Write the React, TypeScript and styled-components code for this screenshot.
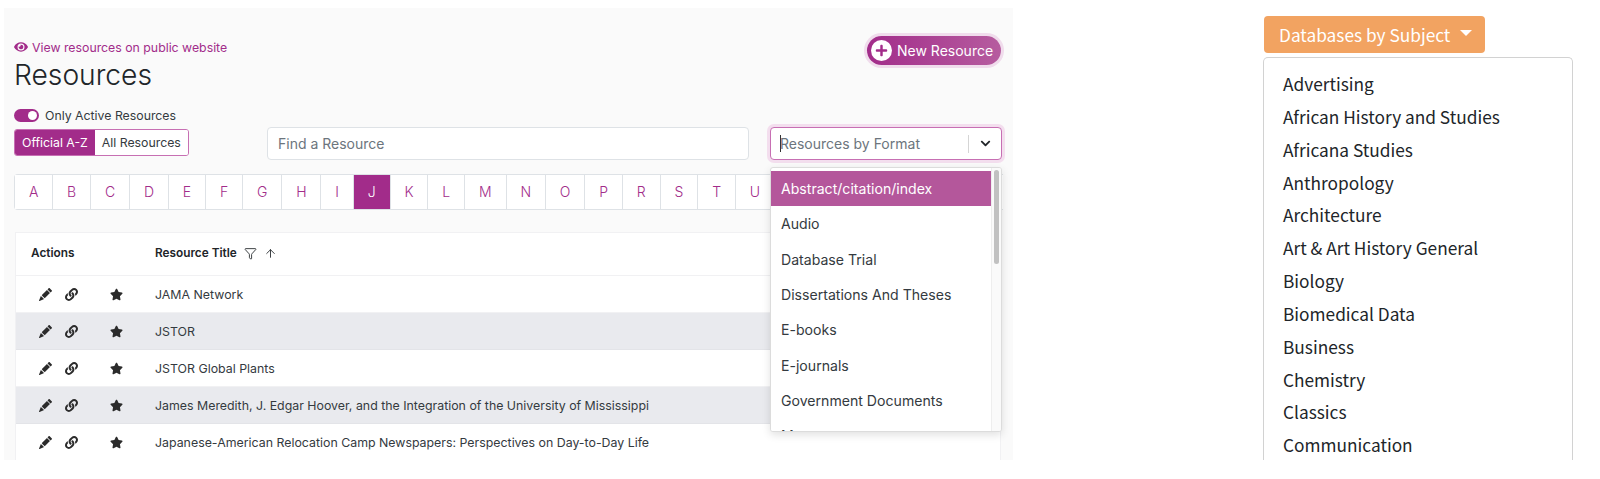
import React from 'react';
import styled, { createGlobalStyle } from 'styled-components';
import { FaEye, FaLink, FaPlus, FaStar, FaChevronDown } from 'react-icons/fa';
import { BsPencilFill } from 'react-icons/bs';
import { ArrowUp, Filter } from 'lucide-react';

const GlobalStyle = createGlobalStyle`
  html, body {
    margin: 0;
    background: #fff;
    font-family: Inter, "Liberation Sans", sans-serif;
  }
`;

const Page = styled.div`
  display: flex;
  width: 1600px;
  height: 479px;
  overflow: hidden;
`;

const Panel = styled.div`
  box-sizing: border-box;
  width: 1009px;
  height: 452px;
  margin: 8px 0 0 4px;
  padding: 31px 10px 0;
  background: #fafafa;
  overflow: hidden;
  flex: none;
`;

const HeaderRow = styled.div`
  display: flex;
  justify-content: space-between;
  align-items: flex-start;
  height: 56px;
`;

const PublicLink = styled.a`
  display: flex;
  align-items: center;
  gap: 4px;
  height: 16px;
  font-size: 12.3px;
  color: #a22c8a;
  svg { width: 14px; height: 14px; }
`;

const Title = styled.h1`
  margin: 0;
  font-size: 28.2px;
  line-height: 40px;
  font-weight: 300;
  color: #212529;
`;

const NewButton = styled.button`
  display: flex;
  align-items: center;
  gap: 5px;
  box-sizing: border-box;
  width: 134px;
  height: 29px;
  margin: -3px 2px 0 0;
  padding: 0 0 0 4px;
  border: 0;
  border-radius: 15px;
  background: linear-gradient(90deg, #a22c8a, #b65c9f);
  box-shadow: 0 0 0 3px #f0dcec;
  color: #fff;
  font: 400 14px Inter, sans-serif;
`;

const PlusBadge = styled.span`
  display: flex;
  align-items: center;
  justify-content: center;
  width: 21px;
  height: 21px;
  border-radius: 50%;
  background: #fff;
  color: #a22c8a;
  svg { width: 13px; height: 13px; }
`;

const Controls = styled.div`
  display: flex;
  align-items: flex-end;
  margin-top: 13px;
`;

const LeftControls = styled.div`
  width: 253px;
  padding-bottom: 4px;
  flex: none;
`;

const ToggleRow = styled.div`
  display: flex;
  align-items: center;
  gap: 6px;
  height: 14px;
  font-size: 12.3px;
  color: #343a40;
`;

const Toggle = styled.span`
  display: flex;
  justify-content: flex-end;
  align-items: center;
  box-sizing: border-box;
  width: 25px;
  height: 13px;
  padding: 0 2px;
  border-radius: 7px;
  background: #a22c8a;
  &::after {
    content: '';
    width: 9px;
    height: 9px;
    border-radius: 50%;
    background: #fff;
  }
`;

const ButtonGroup = styled.div`
  display: flex;
  width: fit-content;
  box-sizing: border-box;
  height: 27px;
  margin-top: 7px;
  border: 1px solid #c76fb3;
  border-radius: 3px;
  overflow: hidden;
  background: #fff;
`;

const GroupButton = styled.span<{ $active?: boolean }>`
  display: flex;
  align-items: center;
  padding: 0 7px;
  font-size: 12.3px;
  background: ${p => (p.$active ? '#a22c8a' : '#fff')};
  color: ${p => (p.$active ? '#fff' : '#343a40')};
`;

const SearchBox = styled.div`
  display: flex;
  align-items: center;
  box-sizing: border-box;
  flex: 1;
  height: 33px;
  padding: 0 10px;
  border: 1px solid #dee2e6;
  border-radius: 4px;
  background: #fff;
  font-size: 14px;
  color: #6c757d;
`;

const SelectWrap = styled.div`
  position: relative;
  width: 232px;
  margin: 0 1px 0 21px;
  flex: none;
`;

const SelectBox = styled.div`
  display: flex;
  align-items: center;
  box-sizing: border-box;
  height: 33px;
  border: 1px solid #c76fb3;
  border-radius: 4px;
  box-shadow: 0 0 0 3px #f3deee;
  background: #fff;
  font-size: 14px;
  color: #6c757d;
`;

const TextCaret = styled.span`
  width: 1px;
  height: 17px;
  margin-left: 9px;
  background: #333;
`;

const SelectText = styled.span`
  flex: 1;
  margin-left: -1px;
`;

const SelectSplit = styled.span`
  width: 1px;
  height: 18px;
  background: #d5d5d5;
`;

const SelectChevron = styled.span`
  display: flex;
  justify-content: center;
  width: 32px;
  color: #212529;
  svg { width: 11px; height: 11px; }
`;

const Dropdown = styled.div`
  position: absolute;
  top: 40px;
  left: 0;
  z-index: 2;
  display: flex;
  box-sizing: border-box;
  width: 232px;
  height: 265px;
  padding-top: 3px;
  border: 1px solid #dcdcdc;
  border-radius: 3px;
  background: #fff;
  box-shadow: 0 3px 8px rgba(0, 0, 0, 0.12);
  overflow: hidden;
`;

const OptionList = styled.div`
  flex: 1;
`;

const Option = styled.div<{ $active?: boolean }>`
  display: flex;
  align-items: center;
  height: 35.3px;
  padding-left: 10px;
  font-size: 14.1px;
  background: ${p => (p.$active ? '#b4579b' : '#fff')};
  color: ${p => (p.$active ? '#fff' : '#343a40')};
`;

const ScrollTrack = styled.div`
  box-sizing: border-box;
  width: 10px;
  margin-top: -3px;
  padding: 2px 2px 0;
  border-left: 1px solid #eee;
  background: #fafafa;
`;

const ScrollThumb = styled.div`
  height: 94px;
  border-radius: 3px;
  background: #c1c1c1;
`;

const Letters = styled.div`
  display: flex;
  height: 36px;
  margin-top: 14px;
  border: 1px solid #dee2e6;
  border-right: 0;
  border-radius: 4px 0 0 4px;
  box-sizing: border-box;
  background: #fff;
`;

const Letter = styled.span<{ $active?: boolean }>`
  display: flex;
  align-items: center;
  justify-content: center;
  box-sizing: border-box;
  padding: 0 13.9px 1px;
  border-right: 1px solid #dee2e6;
  font-size: 14px;
  font-weight: 350;
  background: ${p => (p.$active ? '#a22c8a' : '#fff')};
  color: ${p => (p.$active ? '#fff' : '#a22c8a')};
`;

const Table = styled.div`
  margin: 22px 2px 0 1px;
  background: #fff;
  border: 1px solid #f1f1f3;
  border-bottom: 0;
`;

const TableHead = styled.div`
  display: flex;
  align-items: center;
  height: 43px;
  padding-bottom: 2px;
  box-sizing: border-box;
  border-bottom: 1px solid #f1f1f3;
  font-size: 11.8px;
  font-weight: 600;
  color: #212529;
`;

const HeadActions = styled.span`
  width: 139px;
  padding-left: 15px;
  box-sizing: border-box;
`;

const HeadTitle = styled.span`
  display: flex;
  align-items: center;
  gap: 7px;
  svg { width: 13px; height: 13px; stroke-width: 1.6; }
`;

const Row = styled.div<{ $striped?: boolean }>`
  display: flex;
  align-items: center;
  height: 37px;
  box-sizing: border-box;
  border-bottom: 1px solid ${p => (p.$striped ? '#e3e4e8' : '#f1f1f3')};
  background: ${p => (p.$striped ? '#e9eaee' : '#fff')};
  font-size: 12.37px;
  color: #343a40;
`;

const RowIcons = styled.span`
  display: flex;
  align-items: center;
  width: 139px;
  padding-left: 23px;
  box-sizing: border-box;
  color: #2b2b2b;
  svg { width: 13px; height: 13px; }
`;

const LinkIcon = styled(FaLink)`
  margin-left: 13px;
`;

const StarIcon = styled(FaStar)`
  margin-left: 32px;
`;

const RightColumn = styled.div`
  margin-left: 250px;
  padding-top: 16px;
  width: 310px;
  flex: none;
  font-family: "Noto Sans CJK JP", "Noto Sans", sans-serif;
`;

const SubjectButton = styled.button`
  display: flex;
  align-items: center;
  box-sizing: border-box;
  width: 221px;
  height: 37px;
  margin-left: 1px;
  padding: 0 0 1px 15px;
  border: 0;
  border-radius: 4px;
  background: #f2a361;
  color: #fff;
  font: 400 17.3px "Noto Sans CJK JP", "Noto Sans", sans-serif;
  &::after {
    content: '';
    margin-left: 10px;
    margin-top: -2px;
    border-top: 6px solid #fff;
    border-left: 6px solid transparent;
    border-right: 6px solid transparent;
  }
`;

const SubjectMenu = styled.div`
  box-sizing: border-box;
  height: 403px;
  margin-top: 4px;
  padding-top: 10px;
  border: 1px solid #d2d2d2;
  border-bottom: 0;
  border-radius: 5px 5px 0 0;
  background: #fff;
  overflow: hidden;
`;

const SubjectItem = styled.div`
  height: 32.85px;
  line-height: 32.85px;
  padding-left: 19px;
  font-size: 17.3px;
  color: #212529;
`;

const letters = 'ABCDEFGHIJKLMNOPRSTUV'.split('');
const formats = ['Abstract/citation/index', 'Audio', 'Database Trial', 'Dissertations And Theses', 'E-books', 'E-journals', 'Government Documents', 'Maps'];
const titles = [
  'JAMA Network',
  'JSTOR',
  'JSTOR Global Plants',
  'James Meredith, J. Edgar Hoover, and the Integration of the University of Mississippi',
  'Japanese-American Relocation Camp Newspapers: Perspectives on Day-to-Day Life',
];
const subjects = ['Advertising', 'African History and Studies', 'Africana Studies', 'Anthropology', 'Architecture', 'Art & Art History General', 'Biology', 'Biomedical Data', 'Business', 'Chemistry', 'Classics', 'Communication'];

export default function App() {
  return (
    <Page>
      <GlobalStyle />
      <Panel>
        <HeaderRow>
          <div>
            <PublicLink><FaEye />View resources on public website</PublicLink>
            <Title>Resources</Title>
          </div>
          <NewButton><PlusBadge><FaPlus /></PlusBadge>New Resource</NewButton>
        </HeaderRow>
        <Controls>
          <LeftControls>
            <ToggleRow><Toggle />Only Active Resources</ToggleRow>
            <ButtonGroup>
              <GroupButton $active>Official A-Z</GroupButton>
              <GroupButton>All Resources</GroupButton>
            </ButtonGroup>
          </LeftControls>
          <SearchBox>Find a Resource</SearchBox>
          <SelectWrap>
            <SelectBox>
              <TextCaret />
              <SelectText>Resources by Format</SelectText>
              <SelectSplit />
              <SelectChevron><FaChevronDown /></SelectChevron>
            </SelectBox>
            <Dropdown>
              <OptionList>
                {formats.map((f, i) => <Option key={f} $active={i === 0}>{f}</Option>)}
              </OptionList>
              <ScrollTrack><ScrollThumb /></ScrollTrack>
            </Dropdown>
          </SelectWrap>
        </Controls>
        <Letters>
          {letters.map(l => <Letter key={l} $active={l === 'J'}>{l}</Letter>)}
        </Letters>
        <Table>
          <TableHead>
            <HeadActions>Actions</HeadActions>
            <HeadTitle>Resource Title <Filter /><ArrowUp /></HeadTitle>
          </TableHead>
          {titles.map((t, i) => (
            <Row key={t} $striped={i % 2 === 1}>
              <RowIcons><BsPencilFill /><LinkIcon /><StarIcon /></RowIcons>
              {t}
            </Row>
          ))}
        </Table>
      </Panel>
      <RightColumn>
        <SubjectButton>Databases by Subject</SubjectButton>
        <SubjectMenu>
          {subjects.map(s => <SubjectItem key={s}>{s}</SubjectItem>)}
        </SubjectMenu>
      </RightColumn>
    </Page>
  );
}
